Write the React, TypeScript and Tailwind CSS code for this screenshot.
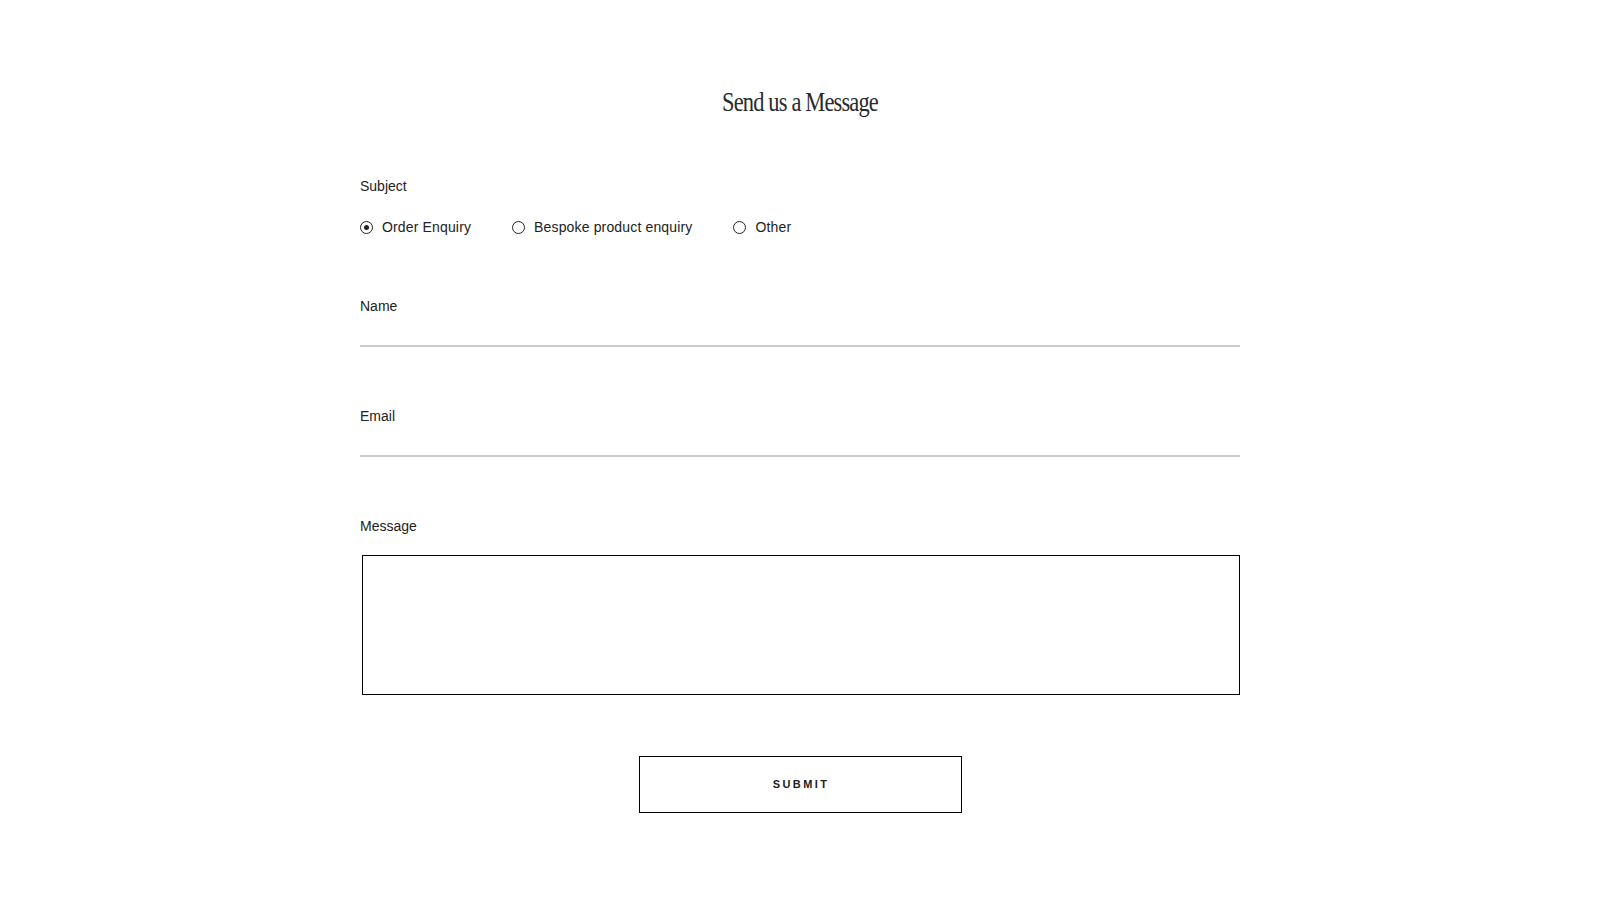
import React, { useState } from 'react';

const options = ['Order Enquiry', 'Bespoke product enquiry', 'Other'];

// 下線だけのテキスト入力
const LineField: React.FC<{ label: string; type?: string; className?: string }> = ({ label, type = 'text', className }) => (
  <div className={className}>
    <label className="block h-5 leading-5 text-[14px] text-[#222]">{label}</label>
    <input
      type={type}
      className="block w-full h-[31px] border-b-2 border-[#cccccc] bg-transparent outline-none text-[14px] text-[#222]"
    />
  </div>
);

const App: React.FC = () => {
  const [subject, setSubject] = useState(options[0]);

  return (
    <div
      className="min-h-screen bg-white flex justify-center"
      style={{ fontFamily: '"Liberation Sans", Arial, sans-serif' }}
    >
      <form className="w-[880px] pt-[86px] pb-[80px]" onSubmit={e => e.preventDefault()}>
        <h2
          className="h-8 leading-8 text-center text-[27px] text-[#2a2a2a] tracking-[-1px] scale-x-[0.83]"
          style={{ fontFamily: '"Liberation Serif", "Times New Roman", serif' }}
        >
          Send us a Message
        </h2>

        <div className="mt-[58px] h-5 leading-5 text-[14px] text-[#222]">Subject</div>
        <div className="mt-[21px] flex items-center gap-[41px] h-5">
          {options.map(opt => (
            <label
              key={opt}
              className="flex items-center gap-[9px] cursor-pointer text-[14px] tracking-[0.15px] text-[#222]"
              onClick={() => setSubject(opt)}
            >
              <span className="w-[13px] h-[13px] rounded-full border-[1.5px] border-[#222] flex items-center justify-center">
                {subject === opt && <span className="w-[5px] h-[5px] rounded-full bg-[#222]" />}
              </span>
              <span>{opt}</span>
            </label>
          ))}
        </div>

        <LineField label="Name" className="mt-[59px]" />
        <LineField label="Email" type="email" className="mt-[59px]" />

        <div className="mt-[59px]">
          <label className="block h-5 leading-5 text-[14px] text-[#222]">Message</label>
          <textarea className="block mt-[19px] ml-[2px] w-[878px] h-[140px] border border-black resize-none outline-none p-2 text-[14px]" />
        </div>

        <div className="mt-[61px] flex justify-center">
          <button
            type="submit"
            className="w-[323px] h-[57px] border border-black bg-white text-[11px] font-bold tracking-[2.4px] text-[#222] pl-[2px]"
          >
            SUBMIT
          </button>
        </div>
      </form>
    </div>
  );
};

export default App;
